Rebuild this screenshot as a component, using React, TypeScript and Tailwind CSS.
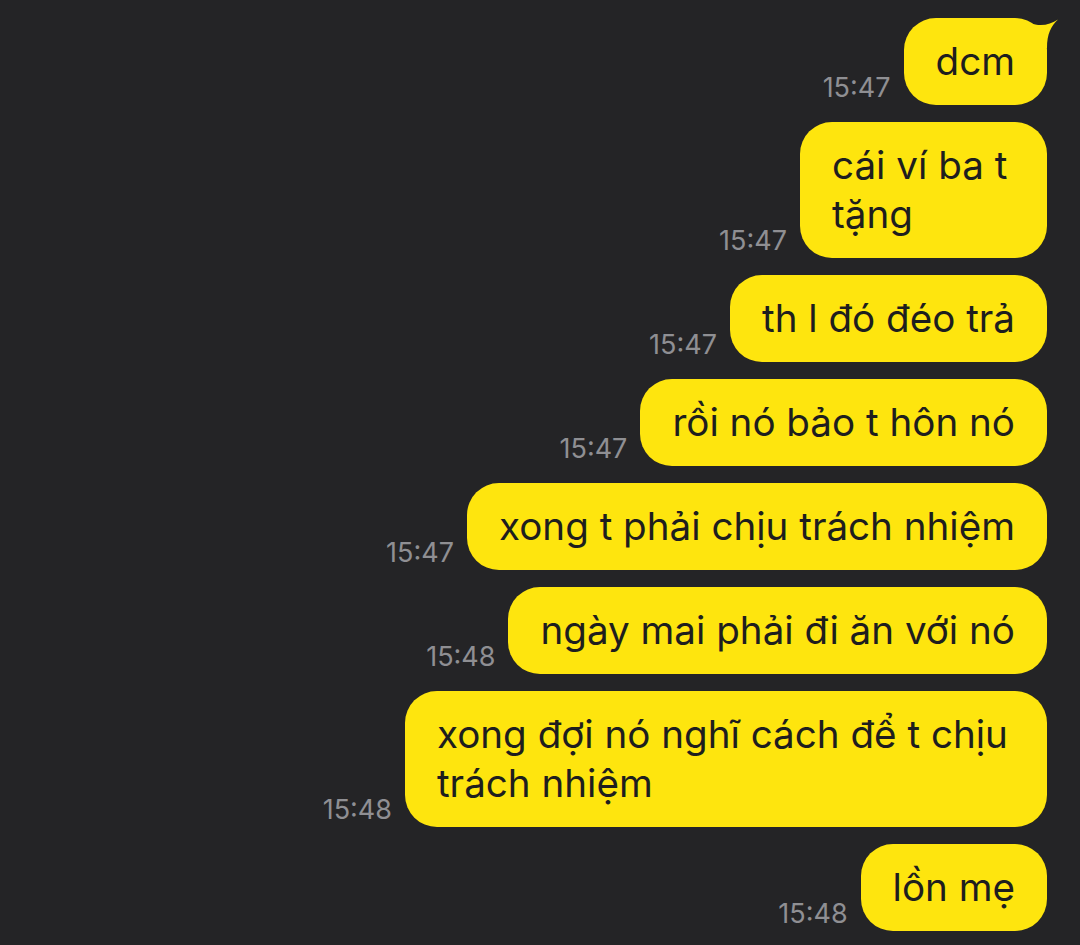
import React from 'react';

type Msg = { text: string; time: string; width?: string; tail?: boolean };

const messages: Msg[] = [
  { text: 'dcm', time: '15:47', tail: true },
  { text: 'cái ví ba t\ntặng', time: '15:47', width: 'w-[247px]' },
  { text: 'th l đó đéo trả', time: '15:47' },
  { text: 'rồi nó bảo t hôn nó', time: '15:47' },
  { text: 'xong t phải chịu trách nhiệm', time: '15:47' },
  { text: 'ngày mai phải đi ăn với nó', time: '15:48' },
  { text: 'xong đợi nó nghĩ cách để t chịu\ntrách nhiệm', time: '15:48', width: 'w-[642px]' },
  { text: 'lồn mẹ', time: '15:48' },
];

// little horn on the first bubble's top-right corner
const Tail: React.FC = () => (
  <svg className="absolute top-0 -right-[11px]" width="40" height="32" viewBox="0 0 40 32">
    <path d="M12 5 C22 9 32 7 40 1.5 C33 8 29 16 29 30 L12 30 Z" fill="#fee50e" />
  </svg>
);

const Bubble: React.FC<{ msg: Msg }> = ({ msg }) => (
  <div className="flex items-end gap-[13px]">
    <span className="text-[27px] leading-none mb-[4px] text-[#8f8f93]">{msg.time}</span>
    <div
      className={`relative rounded-[32px] bg-[#fee50e] text-[#1e1e1e] text-[38.6px] leading-[49px] px-[32px] py-[19px] whitespace-pre-line ${msg.width ?? ''}`}
    >
      {msg.text}
      {msg.tail && <Tail />}
    </div>
  </div>
);

export default function App() {
  return (
    <div
      className="w-[1080px] h-[945px] overflow-hidden bg-[#242426] pt-[18px] pr-[33px] flex flex-col items-end gap-[17px]"
      style={{ fontFamily: 'Inter, "Noto Sans", sans-serif' }}
    >
      {messages.map((m, i) => (
        <Bubble key={i} msg={m} />
      ))}
    </div>
  );
}
